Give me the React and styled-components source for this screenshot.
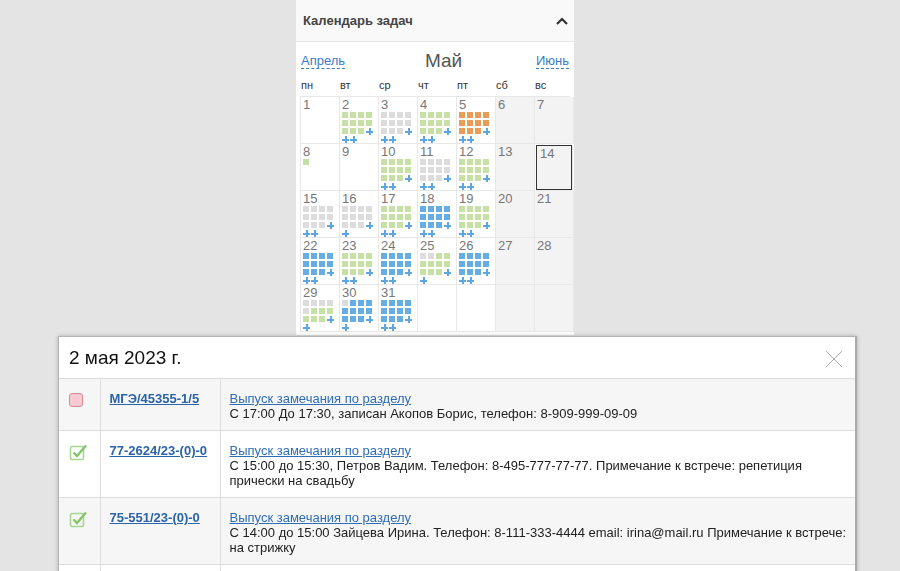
import React from 'react';
import styled, { createGlobalStyle } from 'styled-components';

const GlobalStyle = createGlobalStyle`
  html, body {
    margin: 0;
    padding: 0;
    background: #e4e4e4;
    font-family: "Liberation Sans", Arial, sans-serif;
  }
`;

const COLORS = {
  g: '#c6e0a6',
  x: '#dcdcdc',
  o: '#e89d58',
  b: '#66ade6',
};

const rep = (c, n) => c.repeat(n);

const days = [
  { d: 1 },
  { d: 2, sq: rep('g', 11), p: 2 },
  { d: 3, sq: rep('x', 11), p: 2 },
  { d: 4, sq: rep('g', 11), p: 2 },
  { d: 5, sq: rep('o', 11), p: 2 },
  { d: 6, w: true },
  { d: 7, w: true },
  { d: 8, sq: 'g', p: 0 },
  { d: 9 },
  { d: 10, sq: rep('g', 11), p: 2 },
  { d: 11, sq: rep('x', 11), p: 2 },
  { d: 12, sq: rep('g', 11), p: 2 },
  { d: 13, w: true },
  { d: 14, w: true, today: true },
  { d: 15, sq: rep('x', 11), p: 2 },
  { d: 16, sq: rep('x', 11), p: 1 },
  { d: 17, sq: rep('g', 11), p: 2 },
  { d: 18, sq: rep('b', 11), p: 2 },
  { d: 19, sq: rep('g', 11), p: 2 },
  { d: 20, w: true },
  { d: 21, w: true },
  { d: 22, sq: rep('b', 11), p: 2 },
  { d: 23, sq: rep('g', 11), p: 2 },
  { d: 24, sq: rep('b', 11), p: 2 },
  { d: 25, sq: 'xx' + rep('g', 9), p: 1 },
  { d: 26, sq: rep('b', 11), p: 2 },
  { d: 27, w: true },
  { d: 28, w: true },
  { d: 29, sq: rep('x', 5) + rep('g', 6), p: 1 },
  { d: 30, sq: 'x' + rep('b', 10), p: 1 },
  { d: 31, sq: rep('b', 11), p: 2 },
  { d: null },
  { d: null },
  { d: null, w: true },
  { d: null, w: true },
];

const weekdays = ['пн', 'вт', 'ср', 'чт', 'пт', 'сб', 'вс'];

const tasks = [
  {
    done: false,
    num: 'МГЭ/45355-1/5',
    title: 'Выпуск замечания по разделу',
    text: 'С 17:00 До 17:30, записан Акопов Борис, телефон: 8-909-999-09-09',
  },
  {
    done: true,
    num: '77-2624/23-(0)-0',
    title: 'Выпуск замечания по разделу',
    text: 'С 15:00 до 15:30, Петров Вадим. Телефон: 8-495-777-77-77. Примечание к встрече: репетиция прически на свадьбу',
  },
  {
    done: true,
    num: '75-551/23-(0)-0',
    title: 'Выпуск замечания по разделу',
    text: 'С 14:00 до 15:00 Зайцева Ирина. Телефон: 8-111-333-4444 email: irina@mail.ru Примечание к встрече: на стрижку',
  },
];

function App() {
  return (
    <>
      <GlobalStyle />
      <Page>
        <Panel>
          <PanelHeader>
            <span>Календарь задач</span>
            <svg width="14" height="10" viewBox="0 0 14 10">
              <path d="M2 8 L7 3 L12 8" fill="none" stroke="#333" strokeWidth="2.2" />
            </svg>
          </PanelHeader>
          <PanelBody>
            <MonthNav>
              <NavLink>Апрель</NavLink>
              <MonthTitle>Май</MonthTitle>
              <NavLink>Июнь</NavLink>
            </MonthNav>
            <Weekdays>
              {weekdays.map((w) => (
                <Weekday key={w}>{w}</Weekday>
              ))}
            </Weekdays>
            <Grid>
              {days.map((day, i) => (
                <Cell key={i} $weekend={day.w} $today={day.today}>
                  {day.d && <DayNum>{day.d}</DayNum>}
                  {day.sq && (
                    <Squares>
                      {day.sq.split('').map((c, j) => (
                        <Square key={j} $color={COLORS[c]} />
                      ))}
                      {day.sq.length === 11 && <Plus />}
                    </Squares>
                  )}
                  {day.p > 0 && (
                    <PlusRow>
                      {Array.from({ length: day.p }).map((_, j) => (
                        <Plus key={j} />
                      ))}
                    </PlusRow>
                  )}
                </Cell>
              ))}
            </Grid>
          </PanelBody>
        </Panel>
      </Page>

      <Dialog>
        <DialogHeader>
          <DialogTitle>2 мая 2023 г.</DialogTitle>
          <CloseButton>
            <svg width="18" height="18" viewBox="0 0 18 18">
              <path d="M1 1 L17 17 M17 1 L1 17" stroke="#aaa" strokeWidth="1" />
            </svg>
          </CloseButton>
        </DialogHeader>
        <Table>
          <tbody>
            {tasks.map((t, i) => (
              <Row key={i} $odd={i % 2 === 0}>
                <CheckCell>
                  {t.done ? (
                    <svg width="20" height="18" viewBox="0 0 20 18">
                      <rect x="1.5" y="3.5" width="13" height="13" rx="1.5" fill="none" stroke="#a6d68f" strokeWidth="1.6" />
                      <path d="M4.5 9.5 L8 13 L17 2.5" fill="none" stroke="#86c46a" strokeWidth="2.4" />
                    </svg>
                  ) : (
                    <UncheckedBox />
                  )}
                </CheckCell>
                <NumCell>
                  <NumLink>{t.num}</NumLink>
                </NumCell>
                <TextCell>
                  <TitleLink>{t.title}</TitleLink>
                  <br />
                  {t.text}
                </TextCell>
              </Row>
            ))}
            <Row $odd={false}>
              <CheckCell />
              <NumCell />
              <TextCell $empty />
            </Row>
          </tbody>
        </Table>
      </Dialog>
    </>
  );
}

const Page = styled.div`
  padding-left: 296px;
  min-height: 571px;
`;

const Panel = styled.div`
  width: 278px;
  background: #fff;
`;

const PanelHeader = styled.div`
  height: 42px;
  box-sizing: border-box;
  display: flex;
  align-items: center;
  justify-content: space-between;
  padding: 0 5px 0 7px;
  background: #f9f9f9;
  border-bottom: 1px solid #e6e6e6;
  font-size: 13px;
  font-weight: bold;
  color: #444;
`;

const PanelBody = styled.div`
  padding: 7px 4px 3px 4px;
`;

const MonthNav = styled.div`
  display: flex;
  align-items: center;
  justify-content: space-between;
  height: 24px;
  padding: 0 1px;
`;

const NavLink = styled.span`
  font-size: 13px;
  color: #3b7bc4;
  border-bottom: 1px dashed #3b7bc4;
  line-height: 14px;
  margin-top: 1px;
`;

const MonthTitle = styled.span`
  font-size: 19px;
  color: #555;
  margin-left: 6px;
`;

const Weekdays = styled.div`
  display: grid;
  grid-template-columns: repeat(7, 39px);
  height: 22px;
  align-items: center;
  margin-top: 1px;
`;

const Weekday = styled.span`
  font-size: 11px;
  color: #333;
  padding-left: 1px;
`;

const Grid = styled.div`
  display: grid;
  grid-template-columns: repeat(7, 39px);
  grid-auto-rows: 47px;
  border-top: 1px solid #e8e8e8;
  border-left: 1px solid #e8e8e8;
`;

const Cell = styled.div`
  box-sizing: border-box;
  border-right: 1px solid #e8e8e8;
  border-bottom: 1px solid #e8e8e8;
  background: ${(p) => (p.$weekend ? '#f3f3f3' : '#fff')};
  padding: 2px 0 0 2px;
  box-shadow: ${(p) => (p.$today ? 'inset 0 0 0 1px #333' : 'none')};
  ${(p) => p.$today && 'padding: 3px 0 0 4px; margin: 1px 1px 0 1px;'}
`;

const DayNum = styled.div`
  font-size: 13px;
  line-height: 12px;
  color: #777;
  height: 12px;
`;

const Squares = styled.div`
  display: grid;
  grid-template-columns: repeat(4, 6px);
  grid-auto-rows: 6px;
  gap: 2px;
  margin-top: 1px;
`;

const Square = styled.span`
  display: block;
  background: ${(p) => p.$color};
`;

const Plus = styled.span`
  position: relative;
  display: block;
  width: 7px;
  height: 7px;
  &::before,
  &::after {
    content: '';
    position: absolute;
    background: #5ea6e2;
  }
  &::before {
    left: 0;
    top: 2.5px;
    width: 7px;
    height: 2px;
  }
  &::after {
    left: 2.5px;
    top: 0;
    width: 2px;
    height: 7px;
  }
`;

const PlusRow = styled.div`
  display: flex;
  gap: 1px;
  margin-top: 2px;
`;

const Dialog = styled.div`
  position: fixed;
  left: 58px;
  top: 336px;
  width: 799px;
  height: 260px;
  background: #fff;
  border: 1px solid #b5b5b5;
  border-right: 2px solid #aaa;
  box-shadow: 0 0 4px rgba(0, 0, 0, 0.25);
  box-sizing: border-box;
  overflow: hidden;
`;

const DialogHeader = styled.div`
  height: 42px;
  box-sizing: border-box;
  display: flex;
  align-items: center;
  justify-content: space-between;
  padding: 0 12px 0 10px;
  border-bottom: 1px solid #dcdcdc;
`;

const DialogTitle = styled.span`
  font-size: 19px;
  color: #111;
`;

const CloseButton = styled.span`
  display: flex;
  margin-top: 2px;
`;

const Table = styled.table`
  width: 100%;
  border-collapse: collapse;
  font-size: 13px;
  color: #222;
`;

const Row = styled.tr`
  background: ${(p) => (p.$odd ? '#f6f6f6' : '#fff')};
  td {
    border-bottom: 1px solid #dcdcdc;
    border-right: 1px solid #dcdcdc;
    vertical-align: top;
    line-height: 15px;
  }
  td:last-child {
    border-right: none;
  }
`;

const CheckCell = styled.td`
  width: 41px;
  box-sizing: border-box;
  padding: 12px 0 9px 10px;
`;

const NumCell = styled.td`
  width: 120px;
  box-sizing: border-box;
  padding: 12px 8px 9px 9px;
`;

const TextCell = styled.td`
  padding: 12px 4px 9px 9px;
  height: ${(p) => (p.$empty ? '40px' : 'auto')};
`;

const UncheckedBox = styled.span`
  display: block;
  width: 14px;
  height: 14px;
  margin-top: 2px;
  background: #f9cad2;
  border: 1px solid #d88a95;
  border-radius: 3px;
  box-sizing: border-box;
`;

const NumLink = styled.span`
  font-weight: bold;
  color: #2a63a8;
  text-decoration: underline;
`;

const TitleLink = styled.span`
  color: #2f6db5;
  text-decoration: underline;
`;

export default App;
